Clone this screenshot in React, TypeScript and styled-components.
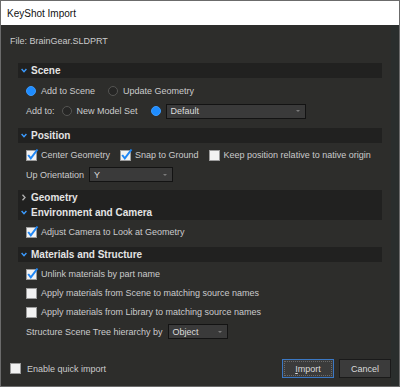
import styled, { createGlobalStyle } from "styled-components";

const GlobalStyle = createGlobalStyle`
  html, body {
    margin: 0;
    padding: 0;
    background: #2d2d2b;
  }
  * {
    box-sizing: border-box;
  }
`;

const Window = styled.div`
  width: 400px;
  height: 387px;
  border: 1px solid #6b6b6b;
  display: flex;
  flex-direction: column;
  font-family: "Liberation Sans", Arial, sans-serif;
  font-size: 9px;
  color: #cbcbcb;
`;

const TitleBar = styled.div`
  height: 24px;
  flex-shrink: 0;
  background: #ffffff;
  color: #111111;
  font-size: 10px;
  display: flex;
  align-items: center;
  padding-left: 6px;
`;

const Body = styled.div`
  flex: 1;
  display: flex;
  flex-direction: column;
  background: #2d2d2b;
  border-right: 8px solid #2a2e2d;
  padding: 10px 0 8px 9px;
`;

const FileLine = styled.div`
  height: 12px;
  line-height: 12px;
`;

const Sections = styled.div`
  margin: 16px 0 0 8px;
  width: 364px;
  display: flex;
  flex-direction: column;
`;

const Header = styled.div`
  height: 15px;
  background: #212120;
  display: flex;
  align-items: center;
  gap: 4px;
  padding-left: 3px;
  font-size: 10px;
  font-weight: bold;
  color: #e4e4e4;
`;

const Content = styled.div<{ $top: number; $bottom: number }>`
  display: flex;
  flex-direction: column;
  gap: 5px;
  padding: ${({ $top }) => $top}px 0 ${({ $bottom }) => $bottom}px 8px;
`;

const Row = styled.div<{ $h?: number }>`
  height: ${({ $h }) => $h ?? 14}px;
  display: flex;
  align-items: center;
  white-space: nowrap;
`;

const Option = styled.label<{ $gap?: number }>`
  display: flex;
  align-items: center;
  gap: ${({ $gap }) => $gap ?? 5}px;
  margin-right: ${({ $gap }) => ($gap ? 10 : 13)}px;
`;

const Radio = styled.span<{ $on?: boolean }>`
  width: 10px;
  height: 10px;
  border-radius: 50%;
  flex-shrink: 0;
  background: ${({ $on }) => ($on ? "#1e8cff" : "#262625")};
  border: 1px solid ${({ $on }) => ($on ? "#3a9bff" : "#555553")};
`;

const Label = styled.span<{ $mr?: number }>`
  margin-right: ${({ $mr }) => $mr ?? 0}px;
`;

const Select = styled.div<{ $w: number }>`
  width: ${({ $w }) => $w}px;
  height: 15px;
  background: #3a3a3a;
  border: 1px solid #131313;
  display: flex;
  align-items: center;
  justify-content: space-between;
  padding: 0 5px 0 4px;
  color: #dcdcdc;
`;

const Caret = styled.span`
  width: 0;
  height: 0;
  border-left: 2px solid transparent;
  border-right: 2px solid transparent;
  border-top: 2px solid #7a7a7a;
`;

const Footer = styled.div`
  margin-top: auto;
  height: 19px;
  display: flex;
  align-items: center;
  gap: 5px;
`;

const Spacer = styled.div`
  flex: 1;
`;

const Button = styled.button<{ $focus?: boolean }>`
  width: 52px;
  height: 19px;
  background: #3b3b3b;
  border: 1px solid ${({ $focus }) => ($focus ? "#3b78c4" : "#1a1a1a")};
  color: #dadada;
  font-family: inherit;
  font-size: 9px;
  padding: 0;
  outline: ${({ $focus }) => ($focus ? "1px dotted #6a6a6a" : "none")};
  outline-offset: -3px;
`;

const Chevron = ({ open }: { open: boolean }) =>
  open ? (
    <svg width="6" height="5" viewBox="0 0 6 5">
      <path d="M0.6 1 L3 3.6 L5.4 1" fill="none" stroke="#3c9cff" strokeWidth="1.4" />
    </svg>
  ) : (
    <svg width="6" height="7" viewBox="0 0 6 7">
      <path d="M1.5 0.8 L4 3.5 L1.5 6.2" fill="none" stroke="#b0b0b0" strokeWidth="1.3" />
    </svg>
  );

const Check = ({ on }: { on?: boolean }) => (
  <svg width="11" height="11" viewBox="0 0 11 11" style={{ overflow: "visible", flexShrink: 0 }}>
    <rect x="0.5" y="0.5" width="10" height="10" fill="#f2f2f2" stroke="#9c9c9c" />
    {on && (
      <path d="M2.2 5 L4.8 8.3 L11.5 -0.5" fill="none" stroke="#1f86f5" strokeWidth="2" />
    )}
  </svg>
);

const Section = ({
  title,
  open = true,
  top = 5,
  bottom = 8,
  children,
}: {
  title: string;
  open?: boolean;
  top?: number;
  bottom?: number;
  children?: React.ReactNode;
}) => (
  <>
    <Header>
      <Chevron open={open} />
      {title}
    </Header>
    {children && (
      <Content $top={top} $bottom={bottom}>
        {children}
      </Content>
    )}
  </>
);

export default function App() {
  return (
    <>
      <GlobalStyle />
      <Window>
        <TitleBar>KeyShot Import</TitleBar>
        <Body>
          <FileLine>File: BrainGear.SLDPRT</FileLine>
          <Sections>
            <Section title="Scene" top={6} bottom={9}>
              <Row>
                <Option>
                  <Radio $on />
                  Add to Scene
                </Option>
                <Option>
                  <Radio />
                  Update Geometry
                </Option>
              </Row>
              <Row $h={16}>
                <Label $mr={7}>Add to:</Label>
                <Option>
                  <Radio />
                  New Model Set
                </Option>
                <Radio $on />
                <Label $mr={5} />
                <Select $w={140}>
                  Default
                  <Caret />
                </Select>
              </Row>
            </Section>
            <Section title="Position">
              <Row>
                <Option $gap={4}>
                  <Check on />
                  Center Geometry
                </Option>
                <Option $gap={4}>
                  <Check on />
                  Snap to Ground
                </Option>
                <Option $gap={4}>
                  <Check />
                  Keep position relative to native origin
                </Option>
              </Row>
              <Row $h={15}>
                <Label $mr={5}>Up Orientation</Label>
                <Select $w={84}>
                  Y
                  <Caret />
                </Select>
              </Row>
            </Section>
            <Section title="Geometry" open={false} />
            <Section title="Environment and Camera">
              <Row>
                <Option $gap={4}>
                  <Check on />
                  Adjust Camera to Look at Geometry
                </Option>
              </Row>
            </Section>
            <Section title="Materials and Structure" bottom={0}>
              <Row>
                <Option $gap={4}>
                  <Check on />
                  Unlink materials by part name
                </Option>
              </Row>
              <Row>
                <Option $gap={4}>
                  <Check />
                  Apply materials from Scene to matching source names
                </Option>
              </Row>
              <Row>
                <Option $gap={4}>
                  <Check />
                  Apply materials from Library to matching source names
                </Option>
              </Row>
              <Row $h={15}>
                <Label $mr={5}>Structure Scene Tree hierarchy by</Label>
                <Select $w={60}>
                  Object
                  <Caret />
                </Select>
              </Row>
            </Section>
          </Sections>
          <Footer>
            <Option $gap={6}>
              <Check />
              Enable quick import
            </Option>
            <Spacer />
            <Button $focus>
              <u>I</u>mport
            </Button>
            <Button>Cancel</Button>
          </Footer>
        </Body>
      </Window>
    </>
  );
}
